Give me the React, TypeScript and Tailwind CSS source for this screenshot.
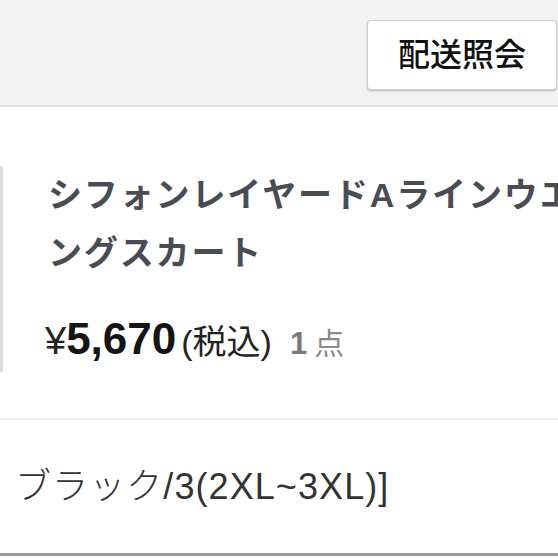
import React from "react";

const font = {
  fontFamily: '"Liberation Sans", "Noto Sans CJK JP", sans-serif',
};

export default function App() {
  return (
    <div className="h-[558px] w-[558px] overflow-hidden bg-white" style={font}>
      {/* top bar */}
      <div className="flex h-[107px] items-start justify-end border-b-2 border-[#dedede] bg-[#f2f2f2] pt-[20px] pr-[1px]">
        <button className="flex h-[70px] w-[190px] items-center justify-center rounded-[4px] border border-[#cfcfcf] bg-white text-[32px] font-medium text-[#111] shadow-[0_1px_2px_rgba(0,0,0,0.25)]">
          配送照会
        </button>
      </div>

      {/* item */}
      <div className="border-b-2 border-[#ececec] pt-[59px] pb-[46px]">
        <div className="flex">
          <div className="w-[3px] self-stretch bg-[#dcdcdc]" />
          <div className="ml-[45px] min-w-0 flex-1">
            <p className="whitespace-nowrap text-[34px] leading-[58px] font-bold tracking-[0.055em] text-[#4a4c55]">
              シフォンレイヤードAラインウエストゴムロ
            </p>
            <p className="whitespace-nowrap text-[34px] leading-[58px] font-bold tracking-[0.055em] text-[#4a4c55]">
              ングスカート
            </p>
            <div className="mt-[28px] -ml-[3px] flex items-baseline whitespace-nowrap leading-[57px]">
              <span className="text-[38px] text-[#222]">¥</span>
              <span className="text-[44px] font-bold text-[#151515]">5,670</span>
              <span className="ml-[5px] text-[34px] text-[#222]">(税込)</span>
              <span className="ml-[18px] text-[31px] font-bold text-[#7a7a7a]">1</span>
              <span className="ml-[7px] text-[30px] text-[#8a8a8a]">点</span>
            </div>
          </div>
        </div>
      </div>

      {/* option */}
      <div className="flex h-[136px] items-center border-b-[3px] border-[#9c9c9c] pl-[15px]">
        <p className="whitespace-nowrap text-[36px] font-light tracking-[0.03em] text-[#333]">
          ブラック/3(2XL~3XL)]
        </p>
      </div>
    </div>
  );
}
